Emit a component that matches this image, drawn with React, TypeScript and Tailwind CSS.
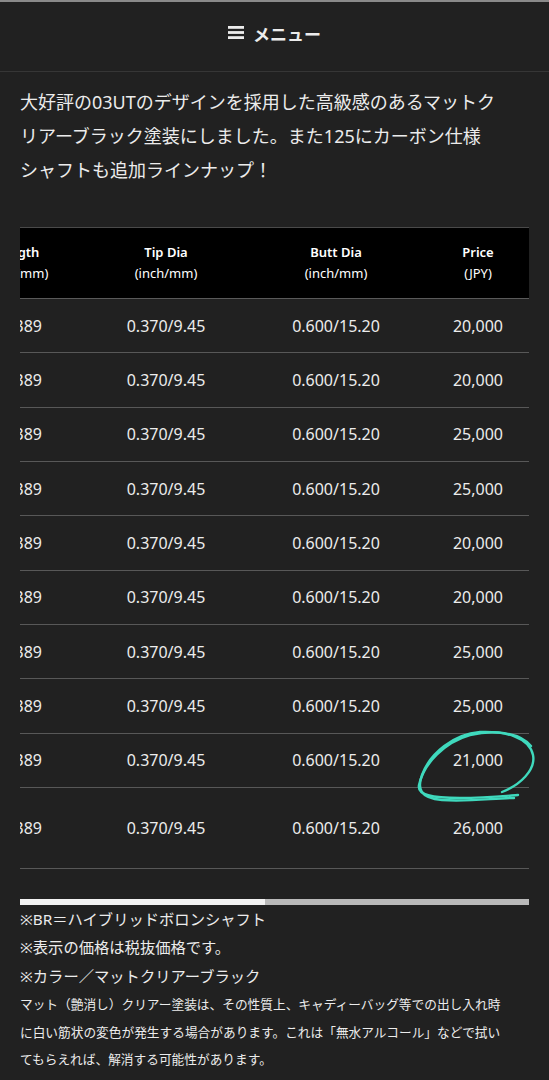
import React from "react";

const rows = [
  "20,000",
  "20,000",
  "25,000",
  "25,000",
  "20,000",
  "20,000",
  "25,000",
  "25,000",
  "21,000",
  "26,000",
];

export default function App() {
  return (
    <div
      className="relative min-h-[1080px] w-[549px] bg-[#212121] text-[#ececec]"
      style={{ fontFamily: '"Noto Sans", "Noto Sans CJK JP", sans-serif' }}
    >
      {/* header */}
      <div className="h-[72px] pb-[5px] border-t-2 border-b border-t-[#8a8a8a] border-b-[#363636] flex items-center justify-center gap-[9px]">
        <svg width="16" height="13" viewBox="0 0 16 13" className="mt-[-4px]">
          <rect x="0" y="0" width="16" height="2.8" fill="#ececec" />
          <rect x="0" y="5.1" width="16" height="2.8" fill="#ececec" />
          <rect x="0" y="10.2" width="16" height="2.8" fill="#ececec" />
        </svg>
        <span className="text-[17px] font-bold" style={{ fontFamily: '"Noto Sans CJK JP", sans-serif' }}>メニュー</span>
      </div>

      {/* intro */}
      <p
        className="mx-5 mt-[13px] text-[18px] leading-[34px] whitespace-nowrap"
        style={{ fontFamily: '"Noto Sans", "Noto Sans CJK JP", sans-serif' }}
      >
        大好評の03UTのデザインを採用した高級感のあるマットク
        <br />
        リアーブラック塗装にしました。また125にカーボン仕様
        <br />
        シャフトも追加ラインナップ！
      </p>

      {/* table */}
      <div className="mx-5 mt-[40px] overflow-hidden">
        <div className="-ml-[53px] w-[1100px]">
          <div className="flex h-[72px] items-center bg-black border-t border-[#4a4a4a] border-b border-b-[#5a5a5a] text-[13px] leading-[21px] text-white">
            <div className="w-[100px] text-center">
              <div className="font-semibold">Length</div>
              <div>(inch/mm)</div>
            </div>
            <div className="w-[198px] text-center">
              <div className="font-semibold">Tip Dia</div>
              <div>(inch/mm)</div>
            </div>
            <div className="w-[142px] text-center">
              <div className="font-semibold">Butt Dia</div>
              <div>(inch/mm)</div>
            </div>
            <div className="w-[142px] text-center">
              <div className="font-semibold">Price</div>
              <div>(JPY)</div>
            </div>
          </div>
          {rows.map((p, i) => (
            <div
              key={i}
              className={`flex items-center border-b border-[#585858] text-[16px] ${
                i === rows.length - 1 ? "h-[81px]" : "h-[54.33px]"
              }`}
            >
              <div className="w-[100px] text-center">38.389</div>
              <div className="w-[198px] text-center">0.370/9.45</div>
              <div className="w-[142px] text-center">0.600/15.20</div>
              <div className="w-[142px] text-center">{p}</div>
            </div>
          ))}
        </div>
      </div>

      {/* scrollbar */}
      <div className="mx-5 mt-[30px] flex h-[6px]">
        <div className="w-[245px] bg-[#f2f2f2]" />
        <div className="flex-1 bg-[#b9b9b9]" />
      </div>

      {/* notes */}
      <div className="mx-5 text-[15.3px] leading-[28.5px] whitespace-nowrap" style={{ fontFamily: '"Noto Sans", "Noto Sans CJK JP", sans-serif' }}>
        <div>※BR＝ハイブリッドボロンシャフト</div>
        <div>※表示の価格は税抜価格です。</div>
        <div>※カラー／マットクリアーブラック</div>
      </div>
      <p className="mx-5 text-[12.7px] leading-[27.5px] whitespace-nowrap" style={{ fontFamily: '"Noto Sans CJK JP", sans-serif' }}>
        マット（艶消し）クリアー塗装は、その性質上、キャディーバッグ等での出し入れ時
        <br />
        に白い筋状の変色が発生する場合があります。これは「無水アルコール」などで拭い
        <br />
        てもらえれば、解消する可能性があります。
      </p>

      {/* annotation */}
      <svg
        className="absolute left-[410px] top-[725px] pointer-events-none"
        width="135"
        height="85"
        viewBox="0 0 135 85"
        fill="none"
        stroke="#3fd9bd"
        strokeWidth="2.4"
        strokeLinecap="round"
      >
        <path d="M92,67 C110,60 126,45 123,30 C119,12 95,6 70,7 C44,9 20,28 12,50 C7,64 10,73 32,75 C58,77 85,73 104,73" />
        <path d="M121,21 C110,8 85,4 60,10 C35,17 14,38 9,60 C7,70 22,73 50,73 C75,73 95,71 108,70" />
      </svg>
    </div>
  );
}
